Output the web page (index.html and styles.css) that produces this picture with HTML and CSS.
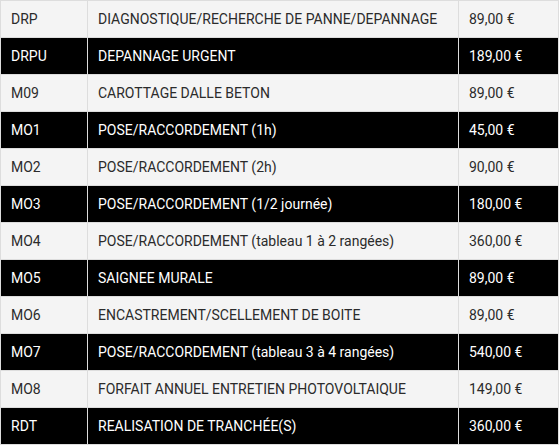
FILE: index.html
```html
<!DOCTYPE html>
<html>
<head>
<meta charset="utf-8">
<link rel="stylesheet" href="styles.css">
</head>
<body>
<table class="tarifs">
  <colgroup>
    <col class="c-code">
    <col class="c-label">
    <col class="c-price">
  </colgroup>
  <tbody>
    <tr class="light"><td>DRP</td><td>DIAGNOSTIQUE/RECHERCHE DE PANNE/DEPANNAGE</td><td>89,00 €</td></tr>
    <tr class="dark"><td>DRPU</td><td>DEPANNAGE URGENT</td><td>189,00 €</td></tr>
    <tr class="light"><td>M09</td><td>CAROTTAGE DALLE BETON</td><td>89,00 €</td></tr>
    <tr class="dark"><td>MO1</td><td>POSE/RACCORDEMENT (1h)</td><td>45,00 €</td></tr>
    <tr class="light"><td>MO2</td><td>POSE/RACCORDEMENT (2h)</td><td>90,00 €</td></tr>
    <tr class="dark"><td>MO3</td><td>POSE/RACCORDEMENT (1/2 journée)</td><td>180,00 €</td></tr>
    <tr class="light"><td>MO4</td><td>POSE/RACCORDEMENT (tableau 1 à 2 rangées)</td><td>360,00 €</td></tr>
    <tr class="dark"><td>MO5</td><td>SAIGNEE MURALE</td><td>89,00 €</td></tr>
    <tr class="light"><td>MO6</td><td>ENCASTREMENT/SCELLEMENT DE BOITE</td><td>89,00 €</td></tr>
    <tr class="dark"><td>MO7</td><td>POSE/RACCORDEMENT (tableau 3 à 4 rangées)</td><td>540,00 €</td></tr>
    <tr class="light"><td>MO8</td><td>FORFAIT ANNUEL ENTRETIEN PHOTOVOLTAIQUE</td><td>149,00 €</td></tr>
    <tr class="dark"><td>RDT</td><td>REALISATION DE TRANCHÉE(S)</td><td>360,00 €</td></tr>
  </tbody>
</table>
</body>
</html>
```

FILE: styles.css
```css
html, body {
  margin: 0;
  padding: 0;
  background: #ffffff;
}
body {
  font-family: Roboto, "Liberation Sans", Arial, sans-serif;
  font-size: 14px;
}
.tarifs {
  border-collapse: collapse;
  width: 559px;
  table-layout: fixed;
}
.c-code { width: 87px; }
.c-label { width: 371px; }
.c-price { width: 100px; }
.tarifs td {
  border: 1px solid #dddddd;
  padding: 8px 10px;
  line-height: 20px;
  height: 20px;
  white-space: nowrap;
  overflow: hidden;
}
.light td {
  background: #f4f4f4;
  color: #2b2b2b;
}
.dark td {
  background: #000000;
  color: #ffffff;
}
```
